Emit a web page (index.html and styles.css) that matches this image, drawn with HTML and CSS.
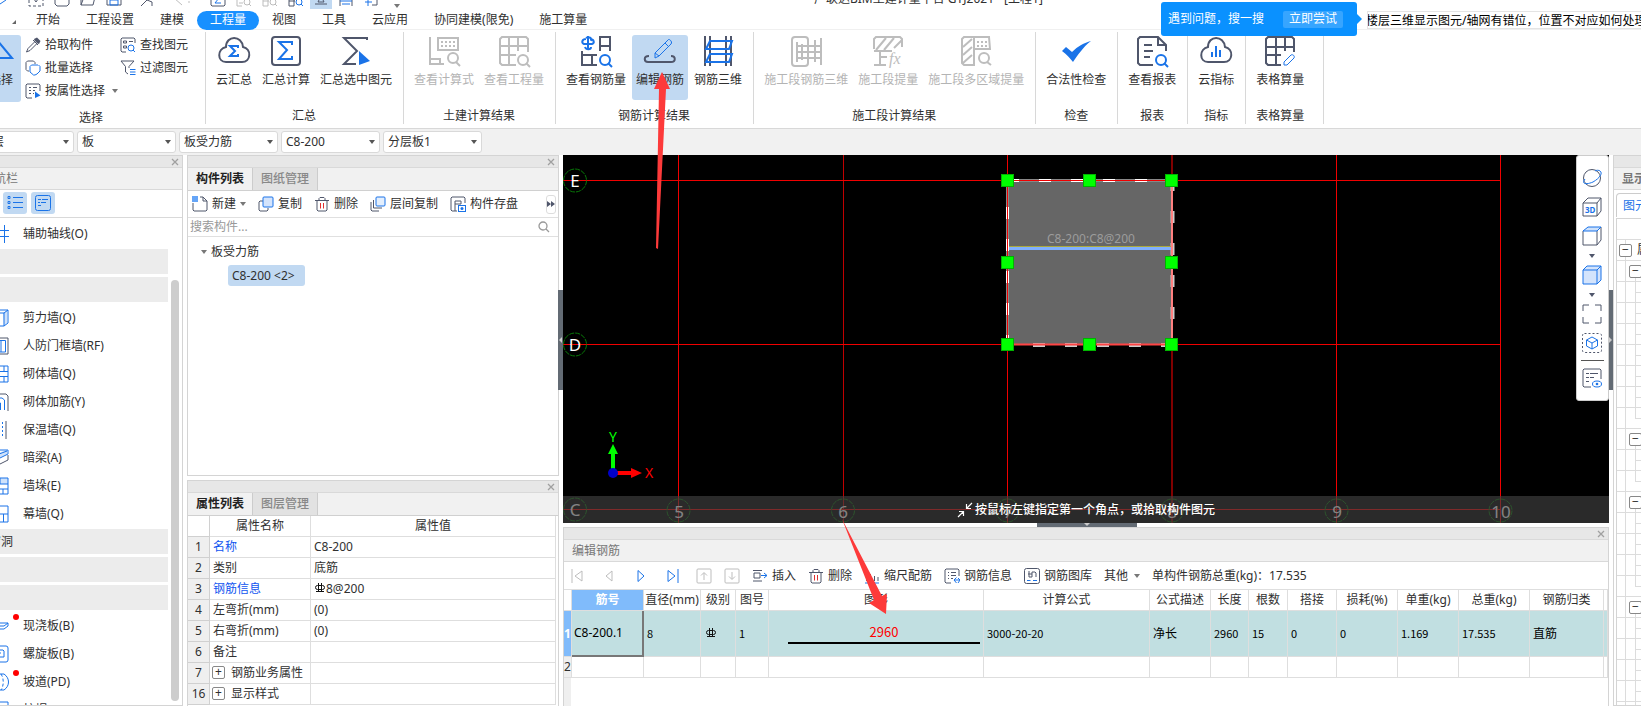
FILE: index.html
```html
<!DOCTYPE html>
<html lang="zh-CN">
<head>
<meta charset="utf-8">
<title>广联达BIM土建计量平台 GTJ2021 - [工程1]</title>
<link rel="stylesheet" href="styles.css">
</head>
<body>
<svg class="defs" aria-hidden="true">
  <symbol id="trash" viewBox="0 0 16 16"><path class="d" d="M1 4.500H15M5 4.500V2.500L6 1.500H10L11 2.500V4.500M3 4.500V14L4 15H12L13 14V4.500"/><path class="r" d="M6.500 7V12.500M9.500 7V12.500"/></symbol>
  <symbol id="rebar" viewBox="0 0 10 10"><rect class="k" x="0.500" y="2.500" width="9" height="4" rx="2"/><path class="k" d="M3.500 0V9M6.500 0V9M1 8.500H9"/></symbol>
  <symbol id="close" viewBox="0 0 8 8"><path d="M1 1L7 7M7 1L1 7" fill="none" stroke="#a0a0a0" stroke-width="1.300"/></symbol>
</svg>

<header class="titlebar">
  <div class="quick">
    <svg class="logo" width="12" height="16"><path class="b" d="M0 13L6 9"/></svg>
    <svg width="16" height="16"><path class="d" stroke-dasharray="3 2" d="M1 1H15V15H1Z"/><path class="d" d="M6 8L8 11L10 8"/></svg>
    <svg width="16" height="16"><path class="d" d="M1 1V13L3 15H13L15 13V1"/></svg>
    <svg width="16" height="16"><path class="d" d="M1 1V14H13L15 6H4L1 14"/></svg>
    <svg width="16" height="16"><path class="d" d="M1 1H15V14H1Z"/><path class="b" d="M4 9H12V14H4Z"/></svg>
    <svg class="wide" width="20" height="16"><path class="d" d="M3 15L9 9L14 11V15"/></svg>
    <svg class="mid" width="20" height="16"><path class="g" d="M2 7L10 14M16 11H18"/></svg>
    <svg width="16" height="16"><path class="d" d="M1 1H15V14L14 15H2L1 14Z"/><path class="b" d="M11 12H5L9 7"/></svg>
    <svg width="16" height="16"><path class="g" d="M1 1V15H6M3 12H7"/><circle class="g" cx="11" cy="11" r="3"/><path class="g" d="M13 13L15 15"/></svg>
    <svg width="16" height="16"><path class="g" d="M1 1V15H6M1 10H7M6 8V15"/><circle class="g" cx="11" cy="11" r="3"/><path class="g" d="M13 13L15 15"/></svg>
    <svg width="16" height="16"><path class="d" d="M1 1V15H6M1 10H7M6 8V15"/><circle class="b" cx="11" cy="11" r="3"/><path class="b" d="M13 13L15 15"/></svg>
    <span class="quick-on"><svg width="16" height="16"><path class="d" d="M2 13H14"/><path class="d" d="M5 11L7 7H9L11 11Z"/></svg></span>
    <svg width="16" height="16"><path class="d" d="M2 1V15M14 1V15"/><path class="b" d="M2 10H14M4 13H12"/></svg>
    <svg width="16" height="16"><path class="d" d="M8 5V8M13 5V14H8"/><path class="b" d="M1 11H8M4 7V15"/></svg>
    <i class="caret"></i>
  </div>
  <h1 class="app-title">广联达BIM土建计量平台 GTJ2021 - [工程1]</h1>
</header>

<nav class="tabs">
  <i class="corner"></i>
  <button>开始</button><button>工程设置</button><button>建模</button><button class="on">工程量</button><button>视图</button><button>工具</button><button>云应用</button><button>协同建模(限免)</button><button>施工算量</button>
  <input class="help-search" aria-label="搜索帮助" value="楼层三维显示图元/轴网有错位，位置不对应如何处理">
</nav>
<aside class="promo"><span>遇到问题，搜一搜</span><button>立即尝试</button></aside>

<section class="ribbon">
  <div class="group pick">
    <div class="tools">
      <button class="big on"><svg width="32" height="32"><path class="b2" d="M12 5L27 23H12"/></svg>选择</button>
      <div class="small-col">
        <button><svg width="16" height="16"><path d="M9 2L12 0.500L15.500 4L14 7L12.500 6.500L9.500 3.500Z" fill="#4f566b"/><path class="d" d="M8 3L13 8M9.500 5L3 11.500L1.500 15L5 13.500L11.500 7"/></svg>拾取构件</button>
        <button><svg width="16" height="16"><path class="d" d="M4 11H2.500L1 9.500V2.500L2.500 1H8.500L10 2.500V4"/><path class="b" d="M13 5H6.500L5 6.500V12L8.500 15H10L12 14L15 11V6.500L13.500 5"/></svg>批量选择</button>
        <button><svg width="16" height="16"><path class="d" d="M7 15H2L1 14V2L2 1H14L15 2V8M4 4.500H6M8 4.500H12M4 7.500H6M8 7.500H10M4 10.500H6M8 10.500H9"/><path d="M10 8.500V15L15.500 12.500Z" fill="#1a73e8"/></svg>按属性选择<i class="caret"></i></button>
      </div>
      <div class="small-col">
        <button><svg width="16" height="16"><path class="d" d="M6 15H2L1 14V2L2 1H14L15 2V6M3.500 4H6.500V6H3.500ZM9 4.500H13M3.500 9H6.500V11H3.500Z"/><circle class="b" cx="11" cy="11" r="3"/><path class="b" d="M13 13L15 15"/></svg>查找图元</button>
        <button><svg width="16" height="16"><path class="d" d="M1 1H14L9 6.500V8M1 1L5.500 6.500V12L8 14"/><path class="b" d="M10 9.500H15.500M10 12H15.500M10 14.500H15.500"/></svg>过滤图元</button>
      </div>
    </div>
    <h2>选择</h2>
  </div>
  <div class="group">
    <div class="tools">
      <button class="big"><svg width="32" height="32"><path class="d2" d="M8 12C8 0 24 0 25 12C34 14 33 27 24 27H8C-1 27-1 14 8 12Z"/><path class="b2" d="M20 13V11H12L17 16L12 21H20V19"/></svg>云汇总</button>
      <button class="big"><svg width="32" height="32"><rect class="d2" x="2" y="2" width="28" height="28" rx="3"/><path class="b2" d="M22 10V7H9L17 15L9 24H22V21"/></svg>汇总计算</button>
      <button class="big"><svg width="32" height="32"><path class="d2" d="M28 3H4L17 16L4 29H16M27 3V5"/><path d="M19 16V30L30 26Z" fill="#1a73e8"/></svg>汇总选中图元</button>
    </div>
    <h2>汇总</h2>
  </div>
  <div class="group">
    <div class="tools">
      <button class="big" disabled><svg width="32" height="32"><path class="g2" d="M2 2V29H16M2 24H12V29M10 3H30V15H10Z"/><path class="g2" stroke-dasharray="2 2" d="M13 7H28M13 11H28"/><circle class="g2" cx="25" cy="23" r="5"/><path class="g2" d="M28 27L32 31"/></svg>查看计算式</button>
      <button class="big" disabled><svg width="32" height="32"><path class="g2" d="M18 30H4L2 28V4L4 2H28L30 4V17M2 11H30M2 20H18M11 2V30M20 2V16"/><circle class="g2" cx="25" cy="25" r="5"/><path class="g2" d="M28 28L32 32"/></svg>查看工程量</button>
    </div>
    <h2>土建计算结果</h2>
  </div>
  <div class="group">
    <div class="tools">
      <button class="big"><svg width="32" height="32"><path class="b2" d="M6 4C2 4 1 8 4 9H12C15 8 14 4 10 4M8 1V15M6 3C9 1 12 3 11 6M11 12C11 15 6 15 5 12"/><path class="d2" d="M20 16V2H30V16M20 11H30M2 16V30H17M2 20H17M12 20V30"/><circle class="b2" cx="25" cy="25" r="5"/><path class="b2" d="M28 28L32 32"/></svg>查看钢筋量</button>
      <button class="big on"><svg width="32" height="32"><path class="b1" d="M11 18L24 5C25 3 29 7 27 9L15 21L11 23ZM21 8L25 12M11 18L15 21"/><path class="d2" d="M5 21C-1 21 0 27 4 27H27C32 27 32 21 27 21"/></svg>编辑钢筋</button>
      <button class="big"><svg width="32" height="32"><path class="d2" d="M3 1V31M8 1V31M24 1V31M29 1V31"/><path class="b2" d="M8 6H30L27 14H4ZM8 19H30L27 27H4Z"/></svg>钢筋三维</button>
    </div>
    <h2>钢筋计算结果</h2>
  </div>
  <div class="group">
    <div class="tools">
      <button class="big" disabled><svg width="32" height="32"><rect class="g2" x="2" y="2" width="16" height="29" rx="3"/><path class="g2" d="M7 7V27M12 9V25M18 5V27M25 5V27M31 3V30M6 11H31M6 17H31M6 23H31"/></svg>施工段钢筋三维</button>
      <button class="big" disabled><svg width="32" height="32"><path class="g2" d="M2 14V4L4 2H28L30 4V12M2 16H20M4 15L14 3M12 15L22 3M22 13L30 5M8 16V30M2 30H14M8 22H15"/><text class="fx" x="17" y="29">fx</text></svg>施工段提量</button>
      <button class="big" disabled><svg width="32" height="32"><path class="g2" d="M14 30H4L2 28V4L4 2H14ZM3 12L12 4M3 20L12 12M3 28L12 20M14 2H29L30 14H14"/><path class="g2" stroke-dasharray="2 2" d="M17 7H27M17 11H27"/><circle class="g2" cx="24" cy="23" r="5"/><path class="g2" d="M27 27L31 30"/></svg>施工段多区域提量</button>
    </div>
    <h2>施工段计算结果</h2>
  </div>
  <div class="group">
    <div class="tools">
      <button class="big"><svg width="32" height="32"><path d="M2 16L6 12L12 17C18 11 24 8 31 6C23 12 18 20 13 27C10 23 7 20 2 16Z" fill="#1a73e8"/></svg>合法性检查</button>
    </div>
    <h2>检查</h2>
  </div>
  <div class="group">
    <div class="tools">
      <button class="big"><svg width="32" height="32"><path class="d2" d="M17 30H4L2 28V4L4 2H22L30 10V16M22 2V10H30M8 10H16M8 16H17M8 22H14"/><circle class="b2" cx="25" cy="25" r="5"/><path class="b2" d="M28 28L32 32"/></svg>查看报表</button>
    </div>
    <h2>报表</h2>
  </div>
  <div class="group">
    <div class="tools">
      <button class="big"><svg width="32" height="32"><path class="d2" d="M8 12C8 0 24 0 25 12C34 14 33 27 24 27H8C-1 27-1 14 8 12Z"/><path class="b2" d="M12 17V22M16 11V22M20 15V22"/></svg>云指标</button>
    </div>
    <h2>指标</h2>
  </div>
  <div class="group last">
    <div class="tools">
      <button class="big"><svg width="32" height="32"><path class="d2" d="M17 30H4L2 28V4L4 2H28L30 4V17M2 12H30M2 20H17M12 2V30M21 2V16"/><path class="b1" d="M20 27L27 20C29 19 31 21 30 23L23 30H20Z"/></svg>表格算量</button>
    </div>
    <h2>表格算量</h2>
  </div>
</section>

<div class="filters">
  <label><select aria-label="楼层"><option>首层</option></select></label>
  <label><select aria-label="构件大类"><option>板</option></select></label>
  <label><select aria-label="构件类型"><option>板受力筋</option></select></label>
  <label><select aria-label="构件"><option>C8-200</option></select></label>
  <label><select aria-label="分层板"><option>分层板1</option></select></label>
</div>

<main class="workspace">
  <section class="panel nav-panel">
    <div class="grip"><button aria-label="关闭"><svg width="8" height="8"><use href="#close"/></svg></button></div>
    <h3 class="nav-title">模块导航栏</h3>
    <div class="nav-views">
      <button aria-label="列表"><svg width="16" height="16"><path class="b" d="M1 1.500H3V3.500H1ZM1 6.500H3V8.500H1ZM1 11.500H3V13.500H1ZM6 2.500H16M6 7.500H16M6 12.500H16"/></svg></button>
      <button aria-label="分组"><svg width="16" height="16"><rect class="b" x="0.500" y="0.500" width="15" height="15" rx="2"/><path class="b" d="M3 4.500H6M7 4.500H13M3 7.500H5M6 7.500H11M3 10.500H6"/></svg></button>
    </div>
    <ul class="nav-list">
      <li><svg width="18" height="18"><path class="b" d="M0 5.500H18M0 11.500H18M13.500 0V18M6.500 0V18"/></svg>辅助轴线(O)</li>
      <li class="bar"></li>
      <li class="bar"></li>
      <li><svg width="18" height="18"><path d="M12 4L16 1V14L13 17Z" fill="#cfe2fb"/><path class="b" d="M1 4H13V17H1M13 4L17 1V14L13 17M1 1H17"/></svg>剪力墙(Q)</li>
      <li><svg width="18" height="18"><path class="d" d="M1 1H17V17H1"/><path class="b" d="M5 17V3.500H14.500V15H5M10 4V15"/></svg>人防门框墙(RF)</li>
      <li><svg width="18" height="18"><path class="b" d="M1 1H17V17H1ZM1 6.500H17M1 11.500H17M13 1V6M8.500 6.500V11.500M13 12V17"/></svg>砌体墙(Q)</li>
      <li><svg width="18" height="18"><path class="d" d="M2 1H15L17 3V18"/><path class="b" d="M3 5H11L13.500 7V17M4 9H8L9.500 10V17"/></svg>砌体加筋(Y)</li>
      <li><svg width="18" height="18"><path class="d" d="M15 0V18"/><path class="b" stroke-dasharray="2 2" d="M11.500 1V17M7.500 1V17"/></svg>保温墙(Q)</li>
      <li><svg width="18" height="18"><path d="M3 5L16 1V6L3 11Z" fill="#cfe2fb"/><path class="b" d="M1 4L9 1H17V5L5 11M3 7L16 2"/><path class="d" d="M17 6V11L5 17"/></svg>暗梁(A)</li>
      <li><svg width="18" height="18"><path d="M9 1H17V7H9Z" fill="#cfe2fb"/><path class="b" d="M1 1H17V17H1ZM9 1V7M1 7H17M1 12H17M12 12V17"/></svg>墙垛(E)</li>
      <li><svg width="18" height="18"><path class="b" d="M1 1H17V17H1M8 1V9M8 9H17M12.500 9V17"/></svg>幕墙(Q)</li>
      <li class="bar named">门窗洞</li>
      <li class="bar"></li>
      <li class="bar"></li>
      <li class="dot"><svg width="18" height="18"><path class="b" d="M1 6H17V9L13 12H1M1 9H13L17 6"/></svg>现浇板(B)</li>
      <li><svg width="18" height="18"><rect class="b" x="1" y="1" width="16" height="16" rx="2"/><path class="b" d="M6 5H12L13 6V12H7V8H10"/></svg>螺旋板(B)</li>
      <li class="dot"><svg width="18" height="18"><path class="b" d="M3 1H13C19 5 19 13 13 17H3"/><path class="b" stroke-dasharray="3 2" d="M10 1C13 5 13 13 10 17"/></svg>坡道(PD)</li>
      <li><svg width="18" height="18"><path class="b" d="M1 1H17V7H12V17H5V7H1Z"/></svg>柱帽(V)</li>
    </ul>
    <i class="thumb"></i>
  </section>

  <div class="mid-col">
    <section class="panel list-panel">
      <div class="grip"><button aria-label="关闭"><svg width="8" height="8"><use href="#close"/></svg></button></div>
      <div class="ptabs"><button class="on">构件列表</button><button>图纸管理</button></div>
      <div class="ptools">
        <button><svg width="16" height="16"><path class="d" d="M8 1H11L15 5V14L14 15H2L1 14V7M11 1V5H15"/><path d="M0 0H6V6H0Z" fill="#3f8ef5" opacity="0.800"/></svg>新建<i class="caret"></i></button>
        <button><svg width="16" height="16"><path class="d" d="M5 5H2L1 6V14L2 15H9L10 14V12"/><rect x="5" y="1" width="10" height="10" rx="1" fill="#d4e4fc" stroke="#1a73e8"/></svg>复制</button>
        <button><svg width="16" height="16"><use href="#trash"/></svg>删除</button>
        <button><svg width="16" height="16"><path class="d" d="M1 6V14L2 15H9M3.500 4V12H12"/><rect x="6" y="1" width="9" height="9" rx="1" fill="#e4effd" stroke="#1a73e8"/></svg>层间复制</button>
        <button><svg width="16" height="16"><path class="d" d="M7 15H2L1 14V2L2 1H14L15 2V7M5 15V5H11M5 8H11V5"/><rect class="b" x="8.500" y="9.500" width="7" height="6"/><circle cx="12" cy="12.500" r="1.500" fill="#1a73e8"/></svg>构件存盘</button>
        <button class="more" aria-label="更多"><svg width="8" height="6"><path d="M0 0L4 3L0 6ZM4 0L8 3L4 6Z" fill="#4f566b"/></svg></button>
      </div>
      <div class="search"><input aria-label="搜索构件" placeholder="搜索构件..."><svg width="12" height="12"><circle cx="5" cy="5" r="4" fill="none" stroke="#999" stroke-width="1.300"/><path d="M8 8L11 11" stroke="#999" stroke-width="1.300"/></svg></div>
      <div class="tree"><div class="node"><i class="caret"></i>板受力筋</div><button class="leaf">C8-200 &lt;2&gt;</button></div>
      <i class="pull side"></i>
    </section>
    <section class="panel prop-panel">
      <div class="grip"><button aria-label="关闭"><svg width="8" height="8"><use href="#close"/></svg></button></div>
      <div class="ptabs"><button class="on">属性列表</button><button>图层管理</button></div>
      <table class="props">
        <colgroup><col class="c-no"><col class="c-name"><col></colgroup>
        <tr class="head"><td></td><th>属性名称</th><th>属性值</th></tr>
        <tr><th>1</th><td class="link">名称</td><td>C8-200</td></tr>
        <tr><th>2</th><td>类别</td><td>底筋</td></tr>
        <tr><th>3</th><td class="link">钢筋信息</td><td><svg class="bar-sym" width="12" height="10"><use href="#rebar"/></svg>8@200</td></tr>
        <tr><th>4</th><td>左弯折(mm)</td><td>(0)</td></tr>
        <tr><th>5</th><td>右弯折(mm)</td><td>(0)</td></tr>
        <tr><th>6</th><td>备注</td><td></td></tr>
        <tr><th>7</th><td><button class="plus" aria-label="展开">+</button>钢筋业务属性</td><td></td></tr>
        <tr><th>16</th><td><button class="plus" aria-label="展开">+</button>显示样式</td><td></td></tr>
      </table>
    </section>
  </div>

  <div class="center">
    <section class="canvas">
      <svg class="drawing">
        <g stroke="#f00000">
          <path d="M115.500 0V368M444.500 0V368M773.500 0V368M937.500 0V368"/>
          <path d="M280.500 0V368" stroke="#c00000"/>
          <path d="M609 0V368" stroke="#800000" stroke-width="2"/>
          <path d="M0 25.500H937M0 189.500H937M0 354.500H937"/>
        </g>
        <g class="axis-ring">
          <circle cx="12" cy="25.500" r="11.500"/><circle cx="12" cy="189.500" r="11.500"/><circle cx="12" cy="354.500" r="11.500"/>
          <circle cx="115.500" cy="355.500" r="11.500"/><circle cx="280" cy="355.500" r="11.500"/><circle cx="444.500" cy="355.500" r="11.500"/><circle cx="609" cy="355.500" r="11.500"/><circle cx="773.500" cy="355.500" r="11.500"/><circle cx="937.500" cy="355.500" r="11.500"/>
        </g>
        <g class="axis-name">
          <text x="12" y="32">E</text><text x="12" y="196">D</text><text x="12" y="361">C</text>
          <text x="116" y="363">5</text><text x="280" y="363">6</text><text x="445" y="363">7</text><text x="609" y="363">8</text><text x="774" y="363">9</text><text x="938" y="363">10</text>
        </g>
        <rect x="444" y="25" width="165" height="165" fill="#666"/>
        <path d="M444 25.500H609M444.500 25V190" stroke="#888" stroke-width="3" fill="none"/>
        <path d="M444 25.500H609M444.500 20V190" stroke="#fff" stroke-width="3" stroke-dasharray="12 20" fill="none"/>
        <path d="M444 190H609M609.500 30V190" stroke="#ccc" stroke-width="4" stroke-dasharray="12 20" stroke-dashoffset="6" fill="none"/>
        <path d="M444 25.500H609M444.500 25V190" stroke="#f00000" fill="none"/>
        <path d="M444 189.500H609" stroke="#f44" stroke-width="2"/>
        <path d="M609 30V190" stroke="#ff8080" stroke-width="2"/>
        <path d="M446 91.500H608" stroke="#aaa83c"/>
        <path d="M446 93.500H608" stroke="#80b0ff" stroke-width="3"/>
        <text class="slab-name" x="528" y="88">C8-200:C8@200</text>
        <g fill="#0f0" stroke="#00b400">
          <rect x="438.500" y="19.500" width="12" height="12"/><rect x="520.500" y="19.500" width="12" height="12"/><rect x="602.500" y="19.500" width="12" height="12"/>
          <rect x="438.500" y="101.500" width="12" height="12"/><rect x="602.500" y="101.500" width="12" height="12"/>
          <rect x="438.500" y="183.500" width="12" height="12"/><rect x="520.500" y="183.500" width="12" height="12"/><rect x="602.500" y="183.500" width="12" height="12"/>
        </g>
        <path d="M48 318V299H45L50 289L55 299H52V318Z" fill="#0f0"/>
        <path d="M50 316H68V313L79 318L68 323V320H50Z" fill="#f00"/>
        <circle cx="50" cy="318" r="5" fill="#0000c8"/>
        <text class="xyz" x="50" y="287" fill="#0f0">Y</text><text class="xyz" x="86" y="323" fill="#f00">X</text>
      </svg>
      <div class="hint"><svg width="16" height="16"><path d="M1 15L6 10M2 9.500H6.500V14M15 1L10 6M9.500 2V6.500H14" fill="none" stroke="#fff" stroke-width="1.200"/></svg>按鼠标左键指定第一个角点，或拾取构件图元</div>
      <div class="view-tools">
        <button aria-label="动态观察"><svg width="20" height="20"><circle class="d" cx="10" cy="10" r="8.500"/><path class="b" d="M3 11C-1 16 4 17 11 14C18 10 21 5 18 3C17 2 14 2 13 3"/></svg></button>
        <button aria-label="三维"><svg width="20" height="20"><path class="d" d="M1 6H15V19H1ZM1 6L6 1H19V14L15 19M15 6L19 1"/><text class="tri" x="3" y="16">3D</text></svg></button>
        <button class="has-menu" aria-label="俯视"><svg width="20" height="20"><path d="M1 5L6 1H19L15 5Z" fill="#cfe2fb"/><path class="d" d="M1 5V19H15V5M15 19L19 14V1"/><path class="b" d="M1 5L6 1H19L15 5Z"/></svg><i class="caret"></i></button>
        <button class="has-menu" aria-label="实体"><svg width="20" height="20"><path d="M1 5L5 1H19V15L15 19H1Z" fill="#d4e4fc"/><path class="b" d="M1 5H15V19H1ZM1 5L5 1H19V15L15 19M15 5L19 1"/></svg><i class="caret"></i></button>
        <button aria-label="全屏"><svg width="20" height="20"><path class="d" d="M1 7V1H7M13 1H19V7M19 13V19H13M7 19H1V13"/></svg></button>
        <button aria-label="局部三维"><svg width="20" height="20"><rect class="d" stroke-dasharray="2 2" x="0.500" y="0.500" width="19" height="19" rx="2"/><path class="b" d="M10 4L15.500 7V13L10 16L4.500 13V7ZM4.500 7L10 10L15.500 7M10 10V16"/></svg></button>
        <hr>
        <button aria-label="显示设置"><svg width="20" height="20"><path class="d" d="M9 19H2L1 18V2L2 1H18L19 2V11M4 5.500H7M8 5.500H16M4 9.500H7M8 9.500H12M4 13.500H7"/><ellipse class="b" cx="15" cy="16" rx="4.500" ry="3"/><circle cx="15" cy="16" r="1.300" fill="#1a73e8"/></svg></button>
      </div>
      <i class="pull bottom"></i><i class="pull right"></i>
    </section>

    <section class="panel edit-panel">
      <div class="grip"><button aria-label="关闭"><svg width="8" height="8"><use href="#close"/></svg></button></div>
      <h3 class="edit-title">编辑钢筋</h3>
      <div class="edit-tools">
        <div class="steps">
          <button aria-label="第一条" disabled><svg width="12" height="16"><path class="g" d="M1 1V15M11 3V13L4 8Z"/></svg></button>
          <button aria-label="上一条" disabled><svg width="12" height="16"><path class="g" d="M9 3V13L3 8Z"/></svg></button>
          <button aria-label="下一条"><svg width="12" height="16"><path class="b" d="M3 2.500V13.500L9 8Z"/></svg></button>
          <button aria-label="最后一条"><svg width="12" height="16"><path class="b" d="M11 1V15M1 2.500V13.500L8 8Z"/></svg></button>
        </div>
        <button aria-label="上移" disabled><svg width="16" height="16"><rect class="g" x="1" y="1" width="14" height="14" rx="1"/><path class="g" d="M8 12V5M5 7.500L8 4.500L11 7.500"/></svg></button>
        <button aria-label="下移" disabled><svg width="16" height="16"><rect class="g" x="1" y="1" width="14" height="14" rx="1"/><path class="g" d="M8 4V11M5 8.500L8 11.500L11 8.500"/></svg></button>
        <button><svg width="16" height="16"><path class="d" d="M1 2.500H10M2 5H8V10H2ZM1 13H10"/><path class="b" d="M9 7.500H15M12 5L15 7.500L12 10"/></svg>插入</button>
        <button><svg width="16" height="16"><use href="#trash"/></svg>删除</button>
        <button><svg width="16" height="16"><path class="d" d="M2.500 4V13M6.500 6V13M10.500 8V13M14 9V13"/><path class="b" d="M1 15H15"/></svg>缩尺配筋</button>
        <button><svg width="16" height="16"><path class="d" d="M7 15H2L1 14V2L2 1H14L15 2V8M4 4.500H5M7 4.500H12M4 7.500H5M7 7.500H12M4 10.500H5M7 10.500H9"/><path class="b" d="M16 12H10M12.500 9.500L10 12L12.500 15M14 10L16 12L14 15"/></svg>钢筋信息</button>
        <button><svg width="16" height="16"><rect class="d" x="0.500" y="0.500" width="15" height="15" rx="2"/><path class="d" d="M5 3V9H8M4 6H8M8 4H11L12 5V9M8 4V9"/><path class="b" d="M3 12.500H6.500M9 12.500H13"/></svg>钢筋图库</button>
        <button>其他<i class="caret"></i></button>
        <span>单构件钢筋总重(kg)：17.535</span>
      </div>
      <table class="rebars">
        <colgroup><col class="w8"><col class="w72"><col class="w57"><col class="w35"><col class="w33"><col><col class="w166"><col class="w61"><col class="w38"><col class="w39"><col class="w49"><col class="w61"><col class="w61"><col class="w71"><col class="w74"><col class="w4"></colgroup>
        <tr><td></td><th class="sel">筋号</th><th>直径(mm)</th><th>级别</th><th>图号</th><th>图形</th><th>计算公式</th><th>公式描述</th><th>长度</th><th>根数</th><th>搭接</th><th>损耗(%)</th><th>单重(kg)</th><th>总重(kg)</th><th>钢筋归类</th><th></th></tr>
        <tr class="cur"><th class="sel">1</th><td class="focus">C8-200.1</td><td>8</td><td><svg width="10" height="10"><use href="#rebar"/></svg></td><td>1</td><td><div class="shape">2960</div></td><td>3000-20-20</td><td class="word">净长</td><td>2960</td><td>15</td><td>0</td><td>0</td><td>1.169</td><td>17.535</td><td class="word">直筋</td><td></td></tr>
        <tr class="next"><th>2</th><td></td><td></td><td></td><td></td><td></td><td></td><td></td><td></td><td></td><td></td><td></td><td></td><td></td><td></td><td></td></tr>
      </table>
      <i class="gutter"></i>
    </section>
  </div>

  <section class="panel show-panel">
    <div class="grip"></div>
    <h3 class="show-title">显示设置</h3>
    <div class="show-tab"><button>图元显示</button></div>
    <ul class="show-tree">
      <li class="blank"></li>
      <li class="l0"><button aria-label="折叠">−</button>属性</li>
      <li class="l1"><button aria-label="折叠">−</button></li>
      <li class="lf"></li><li class="lf"></li><li class="lf"></li><li class="lf"></li><li class="lf"></li><li class="lf"></li><li class="lf"></li>
      <li class="l1"><button aria-label="折叠">−</button></li>
      <li class="lf"></li><li class="lf"></li>
      <li class="l1"><button aria-label="折叠">−</button></li>
      <li class="lf"></li><li class="lf"></li><li class="lf"></li><li class="lf"></li>
      <li class="l1"><button aria-label="折叠">−</button></li>
      <li class="lf"></li><li class="lf"></li><li class="lf"></li><li class="lf"></li><li class="lf"></li>
    </ul>
  </section>
</main>

<svg class="marks" aria-hidden="true">
  <path d="M662 72L670 89H666L658 249L656 248L659 89H654Z"/>
  <path d="M842 519L882 596L887 594L886 614L869 603L874 600Z"/>
</svg>
</body>
</html>
```
FILE: styles.css
```css
* { box-sizing: border-box; }
body {
  margin: 0;
  height: 100vh;
  display: flex;
  flex-direction: column;
  overflow: hidden;
  position: relative;
  background: #fff;
  color: #303030;
  font: 12px/16px "Noto Sans", "Noto Sans CJK SC", sans-serif;
}
button, input, select { font: inherit; color: inherit; margin: 0; padding: 0; border: 0; background: none; }
button { white-space: nowrap; }
h1, h2, h3, ul { margin: 0; padding: 0; font: inherit; list-style: none; }
svg { display: block; flex: none; }
.defs { position: absolute; width: 0; height: 0; }
.d, .b, .g, .r, .k, .d2, .b2, .b1, .g2 { fill: none; stroke-width: 1; }
.d, .d2 { stroke: #4f566b; }
.b, .b2, .b1 { stroke: #1a73e8; }
.g, .g2 { stroke: #bdbdbd; }
.r { stroke: #e03030; }
.k { stroke: #111; }
.d2, .b2, .g2 { stroke-width: 2; }
.fx { font: italic 16px "Liberation Serif", serif; fill: #bdbdbd; }
.tri { font: bold 8px "Noto Sans", sans-serif; fill: #1a73e8; }
.caret { display: inline-block; border: 3px solid transparent; border-top: 4px solid #777; border-bottom: 0; }

/* title bar */
.titlebar { flex: none; height: 10px; display: flex; overflow: hidden; position: relative; }
.quick { display: flex; align-items: flex-end; gap: 10px; padding-bottom: 3px; }
.logo { margin-right: 6px; }
.wide { margin-left: 6px; }
.mid { margin: 0 8px 0 4px; }
.quick-on { background: #c1d9f2; padding: 0 3px 2px; margin: 0 -4px -2px; }
.quick .caret { margin: 0 0 -1px 4px; }
.app-title { position: absolute; top: -9px; left: 814px; white-space: nowrap; }

/* ribbon tabs */
.tabs { flex: none; height: 20px; display: flex; align-items: center; padding-top: 1px; border-bottom: 1px solid #f0f0f0; }
.corner { width: 0; margin: 3px 7px 0 12px; border-left: 4px solid transparent; border-bottom: 4px solid #666; }
.tabs button { height: 19px; padding: 0 13px; border-radius: 10px; }
.tabs .on { background: #1890ff; color: #fff; }
.help-search { width: 274px; height: 18px; margin-left: auto; border: 1px solid #e4e4e4; border-right: 0; text-indent: -2px; color: #000; overflow: hidden; }
.promo {
  position: absolute; top: 2px; right: 284px;
  display: flex; align-items: center; justify-content: space-between;
  width: 196px; height: 34px; padding: 0 14px 0 7px;
  border-radius: 3px; background: #0a91ff; color: #fff;
}
.promo button { padding: 0 6px; height: 17px; border-radius: 2px; background: #37a5ff; }
.promo::after { content: ""; position: absolute; left: 100%; top: 12px; border: 5px solid transparent; border-left-color: #0a91ff; border-right: 0; }

/* ribbon */
.ribbon { flex: none; height: 99px; display: flex; border-bottom: 1px solid #d8d8d8; padding: 2px 0 4px; }
.group { display: flex; flex-direction: column; padding: 3px 7px 0 6px; border-right: 1px solid #d8d8d8; }
.group h2 { text-align: center; margin-top: 8px; }
.tools { display: flex; gap: 2px; height: 67px; }
.big { display: flex; flex-direction: column; align-items: center; padding: 0 4px; border-radius: 3px; }
.big svg { margin-bottom: 5px; overflow: visible; }
.big.on { background: #c1d9f2; }
.big:disabled { color: #b4b4b4; }
.pick { width: 206px; padding-left: 0; }
.pick h2 { margin-right: 16px; }
.pick .big { width: 40px; margin-left: -19px; margin-right: 2px; }
.small-col { display: flex; flex-direction: column; width: 96px; }
.small-col button { display: flex; align-items: center; gap: 4px; height: 23px; flex: none; margin-top: -2px; margin-bottom: 2px; }
.small-col .caret { margin-left: 3px; }
.last { padding-right: 15px; }

/* drop-downs */
.filters { flex: none; height: 26px; display: flex; gap: 3px; padding: 2px 0; margin-left: -25px; background: #f1f1f1; }
.filters label { position: relative; width: 99px; }
.filters select { width: 100%; height: 22px; padding: 0 4px; appearance: none; background: #fff; border: 1px solid #d9d9d9; border-radius: 3px; }
.filters label::after { content: ""; position: absolute; right: 5px; top: 9px; border: 3px solid transparent; border-top: 4px solid #555; border-bottom: 0; pointer-events: none; }

/* panels */
.workspace { flex: 1; min-height: 0; display: grid; grid-template-columns: 183px 372px minmax(0, 1fr) 28px; gap: 4px; }
.workspace > * { min-height: 0; }
.panel { position: relative; display: flex; flex-direction: column; border: 1px solid #d4d4d4; background: #fff; min-height: 0; }
.grip { flex: none; height: 12px; display: flex; justify-content: flex-end; align-items: center; padding-right: 3px; background: #e7e7e7; border-bottom: 1px solid #d9d9d9; }
.nav-title, .edit-title, .show-title { flex: none; height: 22px; line-height: 21px; background: #f1f1f1; color: #777; border-bottom: 1px solid #d9d9d9; }
.nav-panel { border-left: 0; overflow: hidden; }
.nav-title { text-indent: -42px; }
.nav-views { flex: none; height: 28px; display: flex; gap: 4px; padding: 2px 3px; border-bottom: 1px solid #d9d9d9; }
.nav-views button { width: 24px; height: 22px; padding: 0 4px; border-radius: 3px; background: #c1d9f2; }
.nav-list { display: flex; flex-direction: column; gap: 3px; padding: 3px 14px 0 0; }
.nav-list li { position: relative; flex: none; height: 25px; display: flex; align-items: center; gap: 14px; }
.nav-list svg { margin-left: -9px; }
.nav-list .bar { background: #ececec; }
.nav-list .named { text-indent: -23px; }
.dot::after { content: ""; position: absolute; left: 13px; top: 1px; width: 6px; height: 6px; border-radius: 3px; background: #f00; }
.thumb { position: absolute; right: 3px; top: 124px; bottom: 4px; width: 8px; border-radius: 4px; background: #cdcdcd; }

.mid-col { display: flex; flex-direction: column; gap: 4px; }
.list-panel { flex: 321 1 0; }
.prop-panel { flex: 226 1 0; border-bottom: 0; overflow: hidden; }
.ptabs { flex: none; height: 23px; display: flex; background: #f1f1f1; border-bottom: 1px solid #d0d0d0; }
.ptabs button { width: 65px; background: #e2e2e2; color: #888; font-weight: 500; border-right: 1px solid #ccc; }
.ptabs .on { background: #f1f1f1; color: #222; font-weight: bold; }
.ptools { flex: none; height: 27px; display: flex; align-items: center; gap: 12px; padding: 0 2px 0 4px; border-bottom: 1px solid #e0e0e0; }
.ptools button, .edit-tools button { display: flex; align-items: center; gap: 4px; }
.ptools .more { width: 10px; height: 19px; margin-left: auto; justify-content: center; border: 1px solid #ddd; border-radius: 3px; }
.search { flex: none; height: 19px; display: flex; align-items: center; padding: 0 8px 0 2px; border-bottom: 1px solid #e0e0e0; }
.search input { flex: 1; outline: 0; }
.search input::placeholder { color: #999; opacity: 1; }
.tree { padding: 7px 0 0 13px; }
.node { display: flex; align-items: center; gap: 4px; }
.leaf { display: block; height: 21px; min-width: 77px; margin: 5px 0 0 27px; padding: 0 4px; border-radius: 3px; background: #c1d9f2; text-align: left; }

table { border-collapse: separate; border-spacing: 0; table-layout: fixed; width: 100%; }
td, th { font-weight: normal; padding: 0; border-right: 1px solid #dedede; border-bottom: 1px solid #dedede; white-space: nowrap; overflow: hidden; }
.props { width: calc(100% - 2px); }
.props tr { height: 21px; }
.props td { padding-left: 3px; }
.props tr > :first-child { background: #efefef; padding: 0; border-color: #d0d0d0; }
.props .head > :first-child { background: #fff; }
.c-no { width: 22px; }
.c-name { width: 101px; }
.props .link { color: #1055f0; }
.bar-sym { display: inline-block; }
.plus { width: 13px; height: 13px; margin: 0 6px 0 -1px; line-height: 10px; border: 1px solid #888; border-radius: 2px; vertical-align: 1px; }

/* model view */
.center { display: flex; flex-direction: column; gap: 4px; min-width: 0; }
.canvas { position: relative; flex: 1; background: #000; }
.drawing { position: absolute; inset: 0; width: 100%; height: 100%; }
.axis-ring { fill: none; stroke: #087808; stroke-dasharray: 5 1; }
.axis-name { fill: #fff; font-size: 17px; text-anchor: middle; }
.slab-name { fill: #9c9c9c; text-anchor: middle; font-size: 12px; }
.xyz { font-size: 14px; text-anchor: middle; }
.hint {
  position: absolute; inset: auto 0 0 0; height: 27px;
  display: flex; align-items: center; justify-content: center; gap: 2px;
  background: rgba(64, 64, 64, 0.650); color: #fff; font-weight: 500;
}
.view-tools { position: absolute; top: 0; right: 0; width: 33px; height: 246px; display: flex; flex-direction: column; align-items: center; gap: 9px; padding: 12px 1px 0 0; background: #fff; border: 1px solid #ccc; border-radius: 3px; }
.view-tools button { display: flex; flex-direction: column; align-items: center; gap: 8px; }
.view-tools .has-menu { margin-bottom: -2px; }
.view-tools hr { width: 23px; margin: -2px 0; border: 0; border-top: 1px solid #555; }
.view-tools .caret { border-top-color: #4f566b; }
.pull { position: absolute; background: #636b74; }
.side { left: 100%; top: 134px; width: 5px; height: 100px; }
.right { left: 100%; top: 135px; width: 4px; height: 100px; }
.bottom { top: 100%; left: 474px; width: 100px; height: 4px; }
.pull::after { content: ""; position: absolute; border: 3px solid transparent; }
.bottom::after { left: 47px; top: 0; border-top-color: #ccc; border-bottom: 0; }
.right::after { left: 0; top: 47px; border-left-color: #ccc; border-right: 0; }
.side::after { left: 1px; top: 47px; border-right-color: #ccc; border-left: 0; }

/* bar editor */
.edit-panel { flex: none; height: 179px; border-bottom: 0; }
.edit-title { padding-left: 8px; }
.edit-tools { flex: none; height: 28px; display: flex; align-items: center; gap: 12px; padding-left: 7px; border-bottom: 1px solid #dedede; }
.edit-tools .steps { display: flex; gap: 20px; margin-right: 5px; }
.edit-tools .caret { margin-left: 2px; }
.rebars tr { height: 21px; }
.rebars .cur { height: 46px; background: #c1dfe1; color: #000; }
.rebars .sel { background: #80bbfb; color: #fff; font-weight: bold; }
.rebars .cur td { padding: 0 0 2px 3px; font-family: "Noto Sans CJK SC", sans-serif; font-size: 11px; }
.rebars .cur .word { font-size: 12px; }
.rebars .cur .focus { font: inherit; padding: 0 0 0 2px; border-right: 2px solid #777; border-bottom: 2px solid #777; }
.rebars .next th { background: #efefef; }
.rebars svg { margin-left: 2px; }
.shape { margin: 0 3px 0 16px; color: #f00; font-size: 13px; text-align: center; border-bottom: 2px solid #000; line-height: 20px; }
.w8 { width: 8px; } .w72 { width: 72px; } .w57 { width: 57px; } .w35 { width: 35px; } .w33 { width: 33px; }
.w166 { width: 166px; } .w61 { width: 61px; } .w38 { width: 38px; } .w39 { width: 39px; } .w49 { width: 49px; }
.w71 { width: 71px; } .w74 { width: 74px; } .w4 { width: 4px; }
.gutter { flex: 1; width: 7px; background: #efefef; }

/* display settings */
.show-panel { border-right: 0; overflow: hidden; white-space: nowrap; }
.show-title { padding-left: 8px; font-weight: bold; }
.show-tab { flex: none; height: 28px; padding: 3px 0 0 2px; }
.show-tab button { height: 24px; padding: 0 6px; border: 1px solid #ccc; border-bottom: 0; border-radius: 4px 0 0 0; color: #1a73e8; }
.show-tree { margin-left: 2px; border-left: 1px solid #d4d4d4; border-top: 1px solid #d4d4d4; }
.show-tree li { position: relative; height: 21px; display: flex; align-items: center; border-bottom: 1px solid #dcdcdc; }
.show-tree li:not(.blank)::before { content: ""; position: absolute; left: 8px; top: 0; bottom: -1px; border-left: 1px solid #dcdcdc; }
.show-tree .lf::after { content: ""; position: absolute; left: 18px; right: 0; top: -11px; height: 21px; border-left: 1px solid #dcdcdc; border-bottom: 1px solid #dcdcdc; }
.show-tree button { position: relative; z-index: 1; width: 13px; height: 13px; line-height: 10px; background: #fff; border: 1px solid #888; border-radius: 2px; flex: none; }
.l0 { padding-left: 2px; gap: 5px; }
.l1 { padding-left: 12px; }

.marks { position: absolute; inset: 0; width: 100%; height: 100%; fill: #fd3a3a; pointer-events: none; }
```
